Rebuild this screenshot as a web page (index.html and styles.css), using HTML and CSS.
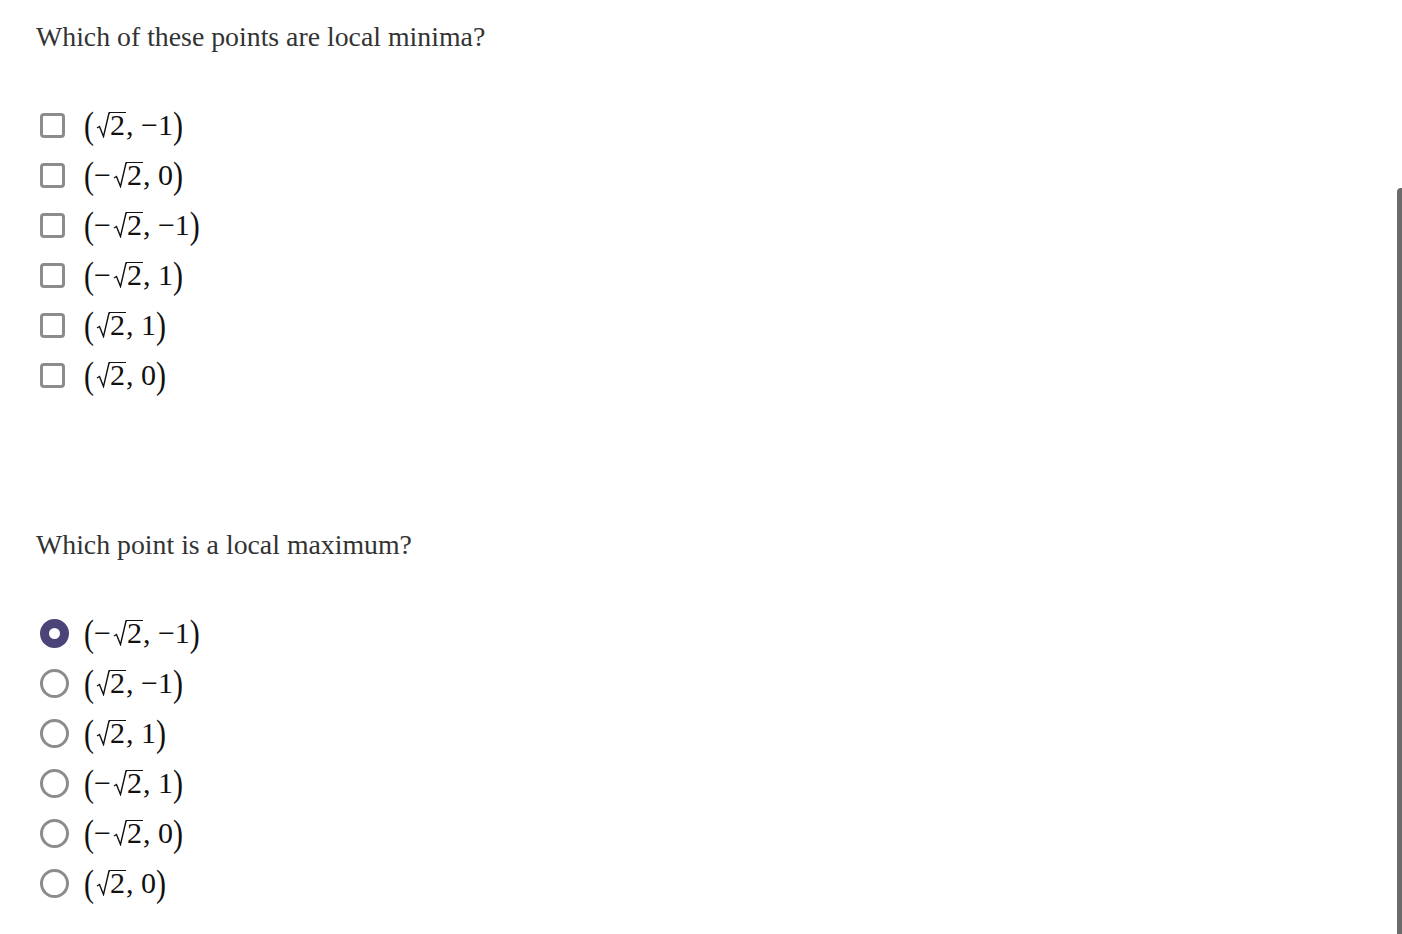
FILE: index.html
```html
<!DOCTYPE html>
<html lang="en">
<head>
  <meta charset="UTF-8" />
  <title>Local extrema quiz</title>
  <link rel="stylesheet" href="styles.css">
</head>
<body>
  <div class="quiz">
    <div class="question">
      <p class="prompt">Which of these points are local minima?</p>
      <div class="options">
        <label class="option"><input type="checkbox" /><span class="math"><span class="paren">(</span><span class="sqrt"><svg class="root" viewBox="0 0 14 26" width="14" height="26"><path d="M1 16 L3.5 14.5 L7.5 24.5 L13 1 L14 1" /></svg><span class="rad">2</span></span>, −1<span class="paren">)</span></span></label>
        <label class="option"><input type="checkbox" /><span class="math"><span class="paren">(</span>−<span class="sqrt"><svg class="root" viewBox="0 0 14 26" width="14" height="26"><path d="M1 16 L3.5 14.5 L7.5 24.5 L13 1 L14 1" /></svg><span class="rad">2</span></span>, 0<span class="paren">)</span></span></label>
        <label class="option"><input type="checkbox" /><span class="math"><span class="paren">(</span>−<span class="sqrt"><svg class="root" viewBox="0 0 14 26" width="14" height="26"><path d="M1 16 L3.5 14.5 L7.5 24.5 L13 1 L14 1" /></svg><span class="rad">2</span></span>, −1<span class="paren">)</span></span></label>
        <label class="option"><input type="checkbox" /><span class="math"><span class="paren">(</span>−<span class="sqrt"><svg class="root" viewBox="0 0 14 26" width="14" height="26"><path d="M1 16 L3.5 14.5 L7.5 24.5 L13 1 L14 1" /></svg><span class="rad">2</span></span>, 1<span class="paren">)</span></span></label>
        <label class="option"><input type="checkbox" /><span class="math"><span class="paren">(</span><span class="sqrt"><svg class="root" viewBox="0 0 14 26" width="14" height="26"><path d="M1 16 L3.5 14.5 L7.5 24.5 L13 1 L14 1" /></svg><span class="rad">2</span></span>, 1<span class="paren">)</span></span></label>
        <label class="option"><input type="checkbox" /><span class="math"><span class="paren">(</span><span class="sqrt"><svg class="root" viewBox="0 0 14 26" width="14" height="26"><path d="M1 16 L3.5 14.5 L7.5 24.5 L13 1 L14 1" /></svg><span class="rad">2</span></span>, 0<span class="paren">)</span></span></label>
      </div>
    </div>

    <div class="question second">
      <p class="prompt">Which point is a local maximum?</p>
      <div class="options">
        <label class="option"><input type="radio" name="max" checked /><span class="math"><span class="paren">(</span>−<span class="sqrt"><svg class="root" viewBox="0 0 14 26" width="14" height="26"><path d="M1 16 L3.5 14.5 L7.5 24.5 L13 1 L14 1" /></svg><span class="rad">2</span></span>, −1<span class="paren">)</span></span></label>
        <label class="option"><input type="radio" name="max" /><span class="math"><span class="paren">(</span><span class="sqrt"><svg class="root" viewBox="0 0 14 26" width="14" height="26"><path d="M1 16 L3.5 14.5 L7.5 24.5 L13 1 L14 1" /></svg><span class="rad">2</span></span>, −1<span class="paren">)</span></span></label>
        <label class="option"><input type="radio" name="max" /><span class="math"><span class="paren">(</span><span class="sqrt"><svg class="root" viewBox="0 0 14 26" width="14" height="26"><path d="M1 16 L3.5 14.5 L7.5 24.5 L13 1 L14 1" /></svg><span class="rad">2</span></span>, 1<span class="paren">)</span></span></label>
        <label class="option"><input type="radio" name="max" /><span class="math"><span class="paren">(</span>−<span class="sqrt"><svg class="root" viewBox="0 0 14 26" width="14" height="26"><path d="M1 16 L3.5 14.5 L7.5 24.5 L13 1 L14 1" /></svg><span class="rad">2</span></span>, 1<span class="paren">)</span></span></label>
        <label class="option"><input type="radio" name="max" /><span class="math"><span class="paren">(</span>−<span class="sqrt"><svg class="root" viewBox="0 0 14 26" width="14" height="26"><path d="M1 16 L3.5 14.5 L7.5 24.5 L13 1 L14 1" /></svg><span class="rad">2</span></span>, 0<span class="paren">)</span></span></label>
        <label class="option"><input type="radio" name="max" /><span class="math"><span class="paren">(</span><span class="sqrt"><svg class="root" viewBox="0 0 14 26" width="14" height="26"><path d="M1 16 L3.5 14.5 L7.5 24.5 L13 1 L14 1" /></svg><span class="rad">2</span></span>, 0<span class="paren">)</span></span></label>
      </div>
    </div>
  </div>

  <div class="scrollbar"></div>
</body>
</html>
```

FILE: styles.css
```css
body {
  margin: 0;
  padding: 0;
  background: #fff;
  font-family: 'Liberation Serif', 'Times New Roman', serif;
  color: #333;
}

.quiz {
  padding: 18px 0 0 36px;
}

.prompt {
  margin: 0;
  font-size: 27.8px;
  line-height: 38px;
}

.options {
  margin-top: 44px;
}

.second {
  margin-top: 126px;
}

.option {
  display: flex;
  align-items: center;
  height: 50px;
  cursor: pointer;
}

.option input {
  appearance: none;
  -webkit-appearance: none;
  margin: 0 0 0 4px;
  flex: none;
  cursor: pointer;
}

input[type="checkbox"] {
  width: 25px;
  height: 25px;
  border: 3px solid #8c8c8c;
  border-radius: 4px;
  margin-right: 19px !important;
}

input[type="radio"] {
  width: 29px;
  height: 29px;
  border: 3px solid #8c8c8c;
  border-radius: 50%;
  margin-right: 15px !important;
}

input[type="radio"]:checked {
  border: 9px solid #4b4478;
  background: #fff;
}

.math {
  font-size: 30px;
  line-height: 40px;
  color: #111;
  white-space: pre;
}

.paren {
  display: inline-block;
  transform: scaleY(1.25);
}

.sqrt {
  display: inline-block;
  margin-left: 2px;
}

.root {
  vertical-align: -3px;
  fill: none;
  stroke: #111;
  stroke-width: 1.4;
  stroke-linejoin: miter;
}

.rad {
  display: inline-block;
  border-top: 1.4px solid #111;
  line-height: 24px;
  margin-left: -1px;
  padding: 0 1px 0 1px;
}

.scrollbar {
  position: fixed;
  right: 0;
  top: 188px;
  bottom: 0;
  width: 5px;
  background: #6b6b6b;
  border-radius: 4px 0 0 0;
}
```
